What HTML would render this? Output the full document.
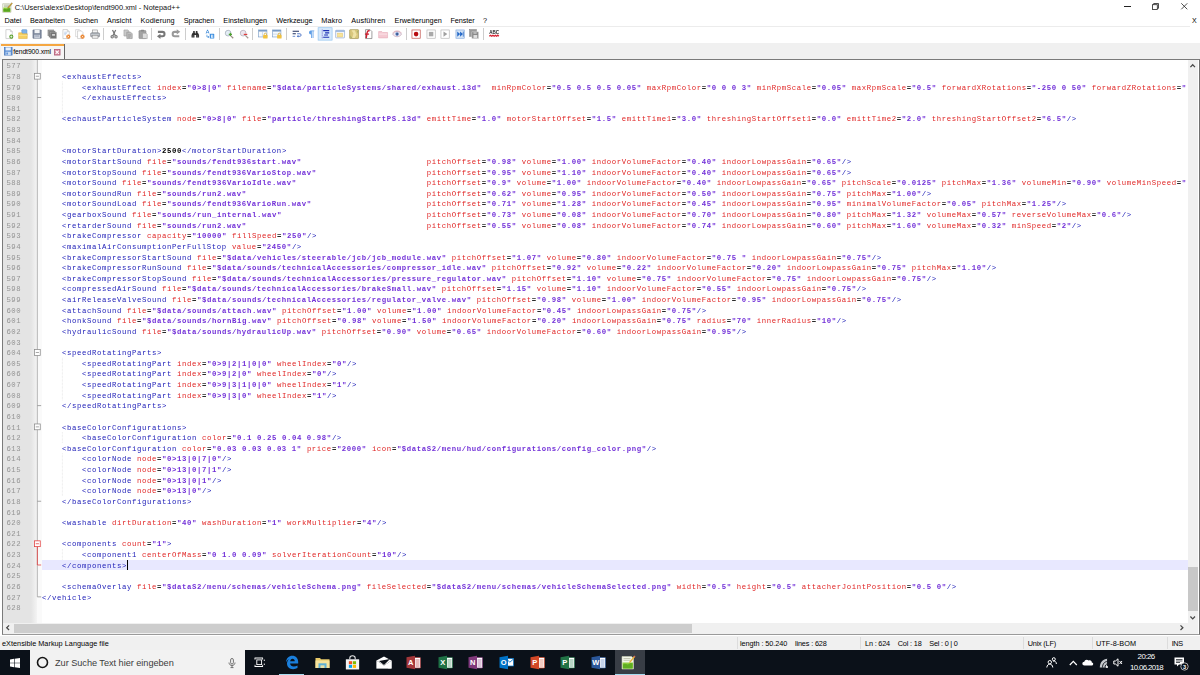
<!DOCTYPE html>
<html><head><meta charset="utf-8"><title>fendt900.xml - Notepad++</title>
<style>
*{box-sizing:border-box;margin:0;padding:0}
html,body{width:1200px;height:675px;overflow:hidden;background:#fff}
body{position:relative;font-family:"Liberation Sans",sans-serif;color:#000}
.abs{position:absolute}
svg{overflow:visible}
.ui{position:absolute;white-space:pre;font-size:7.4px;line-height:10px;color:#000}
#title{left:14.7px;top:2.2px;font-size:7.6px}
.menu{top:15.6px}
#tabbar{left:0;top:42.5px;width:1200px;height:17px;background:#f0f0f0}
#tab{left:1.3px;top:44px;width:63.4px;height:15px;background:#f6f6f6;border-right:1px solid #666}
#tabtop{left:1.3px;top:44px;width:63px;height:2.3px;background:#f5a742}
#edborder{left:1.6px;top:58.8px;width:1198px;height:576px;border:1px solid #7a7a7a;border-right-color:#707070;border-bottom-color:#9a9a9a;background:#fff}
#lnmargin{left:2.7px;top:59.8px;width:28.5px;height:563.5px;background:#e4e4e4}
#symmargin{left:31.2px;top:59.8px;width:6px;height:563.5px;background:linear-gradient(90deg,#e4e4e4,#f4f4f4)}
#foldmargin{left:37.2px;top:59.8px;width:4.6px;height:563.5px;background:#fafafa}
#foldline{left:37px;top:59.8px;width:0.7px;height:563.5px;background:#9a9a9a}
#curline{left:42px;top:559.7px;width:1146.2px;height:10.6px;background:#e8e8ff}
.ln,.cl{position:absolute;font-family:"Liberation Mono",monospace;font-size:7.3px;letter-spacing:0.62px;line-height:10.625px;height:10.625px;white-space:pre}
#clip{left:42px;top:59.8px;width:1145px;height:563.5px;overflow:hidden;filter:blur(0.3px)}
.ln{left:5.7px;width:15.7px;text-align:right;color:#949494;filter:blur(.3px)}
.cl{left:-0.1px;color:#000;margin-top:-59.8px}
.t{color:#2020b8}.a{color:#e02424}.v{color:#7230d8;font-weight:bold}.d{font-weight:bold;color:#000}.o{color:#2a2a2a;font-weight:bold}
#vscroll{left:1188.2px;top:59.8px;width:9.4px;height:563.5px;background:#f0f0f0}
#vthumb{left:1188.2px;top:566.7px;width:9.4px;height:44.7px;background:#c8c8c8}
#hscroll{left:2.7px;top:623.3px;width:1195px;height:10.5px;background:#f0f0f0}
#hthumb{left:13.8px;top:623.9px;width:678px;height:9.2px;background:#cdcdcd}
#corner{left:1188.2px;top:623.3px;width:9.4px;height:10.5px;background:#f0f0f0}
#status{left:0;top:635.6px;width:1200px;height:14.6px;background:#f0f0f0}
.st{top:638.6px}
#taskbar{left:0;top:650px;width:1200px;height:25px;background:#0b1119}
#search{left:30px;top:650px;width:215px;height:25px;background:#f2f2f2}
</style></head><body>
<!-- title bar -->
<svg class="abs" style="left:2.2px;top:1.6px" width="11" height="11" viewBox="0 0 16 16"><path d="M1 2.500h10l2 2V15H1z" fill="#f3f6ea" stroke="#aab08f" stroke-width=".8"/><path d="M2 8h10v6H2z" fill="#8fcf3c"/><path d="M2 10.500c2-2 4 1 6-.5s3-1 4-.5V14H2z" fill="#5aa61f"/><path d="M3 4.500h7M3 6.300h7" stroke="#9aa087" stroke-width=".9"/><path d="M8.500 7.500L14 1l1.200 1-5.200 6.500-1.800.6z" fill="#d9a62e" stroke="#6b5a2a" stroke-width=".5"/></svg>
<div class="abs" style="left:1124px;top:6.1px;width:6.6px;height:.8px;background:#222"></div>
<svg class="abs" style="left:1151.500px;top:2.800px" width="7" height="7" viewBox="0 0 7 7"><path d="M1.700 1.700V.5h4.800v4.800H5.300" fill="none" stroke="#222" stroke-width=".8"/><rect x=".5" y="1.700" width="4.800" height="4.800" fill="none" stroke="#222" stroke-width=".8"/></svg>
<svg class="abs" style="left:1180.800px;top:3px" width="6.600" height="6.600" viewBox="0 0 6.600 6.600"><path d="M.3.300l6 6M6.300.300l-6 6" stroke="#222" stroke-width=".8"/></svg>
<!-- menu -->
<div class="abs" style="left:0;top:26px;width:1190px;height:1px;background:#ececec"></div>
<!-- toolbar -->
<div class="abs" style="left:0;top:27px;width:520px;height:15px;filter:blur(.3px)"><div class="abs" style="left:0;top:-27px;width:520px;height:60px">
<svg class="abs" style="left:3.90px;top:28.80px" width="10.2" height="10.2" viewBox="0 0 16 16"><path d="M3 1h7l3 3v11H3z" fill="#fff" stroke="#b9b9b9" stroke-width="1"/><path d="M10 1v3h3" fill="#e8e8e8" stroke="#b9b9b9" stroke-width=".8"/><circle cx="11.5" cy="12" r="3.2" fill="#5aa02c"/><path d="M9.8 12h3.4M11.5 10.3v3.4" stroke="#fff" stroke-width="1.1"/></svg>
<svg class="abs" style="left:18.30px;top:28.80px" width="10.2" height="10.2" viewBox="0 0 16 16"><rect x="6" y="1" width="8" height="9" rx="1" fill="#7fb2e8" stroke="#4a86c8" stroke-width=".8"/><path d="M1 6h5l1 1.5h7.5V15H1z" fill="#f5cf5f" stroke="#d9a93a" stroke-width=".8"/><path d="M1 10h13.5" stroke="#fbe59a" stroke-width="1.2"/></svg>
<svg class="abs" style="left:31.80px;top:28.80px" width="10.2" height="10.2" viewBox="0 0 16 16"><path d="M1.500 1.500h13v13h-13z" fill="#7f8a9e" stroke="#6a748a" stroke-width="1"/><rect x="4" y="1.500" width="8" height="5" fill="#f1f3f6"/><rect x="3.500" y="9" width="9" height="5.500" fill="#c9cfda"/><rect x="5" y="10.500" width="6" height="1" fill="#7f8aa2"/></svg>
<svg class="abs" style="left:46.90px;top:28.80px" width="10.2" height="10.2" viewBox="0 0 16 16"><rect x="1" y="1" width="10" height="10" fill="#8c8c8c"/><rect x="3" y="3" width="10" height="10" fill="#808080" stroke="#b8b8b8" stroke-width=".5"/><rect x="5" y="5" width="10" height="10" fill="#767676" stroke="#b8b8b8" stroke-width=".5"/><rect x="8" y="8" width="4.500" height="2.500" fill="#e0e0e0"/></svg>
<svg class="abs" style="left:61.20px;top:28.80px" width="10.2" height="10.2" viewBox="0 0 16 16"><path d="M3 1h7l3 3v11H3z" fill="#fff" stroke="#b9b9b9" stroke-width="1"/><path d="M10 1v3h3" fill="#e8e8e8" stroke="#b9b9b9" stroke-width=".8"/><path d="M5 5h5M5 7h4M5 9h3" stroke="#9bb7e0" stroke-width=".9"/><circle cx="11.5" cy="12" r="3.3" fill="#e9822b"/><path d="M10.2 10.7l2.6 2.6M12.8 10.7l-2.6 2.6" stroke="#fff" stroke-width="1"/></svg>
<svg class="abs" style="left:75.10px;top:28.80px" width="10.2" height="10.2" viewBox="0 0 16 16"><path d="M1 1h6l2 2v9H1z" fill="#fff" stroke="#c4c4c4" stroke-width=".9"/><path d="M4 3h6l2.500 2.500v9.500H4z" fill="#fff" stroke="#b9b9b9" stroke-width=".9"/><circle cx="11.8" cy="12" r="3.3" fill="#e9822b"/><path d="M10.5 10.700l2.600 2.600M13.100 10.700l-2.600 2.600" stroke="#fff" stroke-width="1"/></svg>
<svg class="abs" style="left:89.60px;top:28.80px" width="10.2" height="10.2" viewBox="0 0 16 16"><rect x="4" y="1.5" width="8" height="5" fill="#f4f4f4" stroke="#8c8c8c" stroke-width=".9"/><rect x="1" y="6" width="14" height="6.500" rx="1.500" fill="#a9aeb5" stroke="#7c8188" stroke-width=".9"/><rect x="3.500" y="10" width="9" height="4.500" fill="#e9e9e9" stroke="#8c8c8c" stroke-width=".8"/><path d="M1.500 8.500h13" stroke="#d4d7db" stroke-width="1"/></svg>
<div class="abs" style="left:102.75px;top:28.3px;width:.7px;height:11.4px;background:#cdcdcd"></div>
<svg class="abs" style="left:108.90px;top:28.80px" width="10.2" height="10.2" viewBox="0 0 16 16"><path d="M5.500 1.500l4.500 9M10.500 1.500l-4.500 9" stroke="#747474" stroke-width="1.900" fill="none"/><circle cx="5" cy="12.300" r="1.900" fill="none" stroke="#747474" stroke-width="1.600"/><circle cx="11" cy="12.300" r="1.900" fill="none" stroke="#747474" stroke-width="1.600"/></svg>
<svg class="abs" style="left:123.30px;top:28.80px" width="10.2" height="10.2" viewBox="0 0 16 16"><path d="M1.500 1.500h6l2 2v7.500h-8z" fill="#c9c9c9" stroke="#9a9a9a" stroke-width=".9"/><path d="M6 5h6l2.500 2.500v7.500H6z" fill="#bdbdbd" stroke="#8e8e8e" stroke-width=".9"/><path d="M8 9h4.500M8 11h4.500M8 13h3" stroke="#8e8e8e" stroke-width=".8"/></svg>
<svg class="abs" style="left:137.60px;top:28.80px" width="10.2" height="10.2" viewBox="0 0 16 16"><rect x="1.500" y="2.500" width="11" height="12.500" rx="1" fill="#a3a3a3" stroke="#858585" stroke-width=".9"/><rect x="4.500" y="1" width="5" height="3" rx=".8" fill="#8a8a8a"/><path d="M7 6.500h5.500l2 2v6.500H7z" fill="#dcdcdc" stroke="#8e8e8e" stroke-width=".8"/></svg>
<div class="abs" style="left:151.05px;top:28.3px;width:.7px;height:11.4px;background:#cdcdcd"></div>
<svg class="abs" style="left:156.40px;top:28.80px" width="10.2" height="10.2" viewBox="0 0 16 16"><path d="M3 4.500H10C14.500 4.500 14.500 11.500 10 11.500H6" fill="none" stroke="#777" stroke-width="3.200"/><path d="M7 7.300L1.500 11.500 7 15.700z" fill="#777"/></svg>
<svg class="abs" style="left:170.80px;top:28.80px" width="10.2" height="10.2" viewBox="0 0 16 16"><path d="M13 11.500H6C1.500 11.500 1.500 4.500 6 4.500H10" fill="none" stroke="#999" stroke-width="3.200"/><path d="M9 .300L14.500 4.500 9 8.700z" fill="#999"/></svg>
<div class="abs" style="left:185.15px;top:28.3px;width:.7px;height:11.4px;background:#cdcdcd"></div>
<svg class="abs" style="left:191.10px;top:29.90px" width="8.6" height="8.6" viewBox="0 0 16 16"><path d="M4 2h3v4H4zM9 2h3v4H9z" fill="#333"/><path d="M3 5h4.500v1.500h1V5H13l2 4.500V14h-5.500V9.500h-3V14H1V9.500z" fill="#303030"/><path d="M2.500 10h2.500v3H2.500zM11 10h2.500v3H11z" fill="#555"/></svg>
<svg class="abs" style="left:204.60px;top:28.80px" width="10.2" height="10.2" viewBox="0 0 16 16"><path d="M1 7L3.500 1h1L7 7H5.800L5.300 5.600H2.700L2.200 7zM3 4.600h2L4 2.200z" fill="#2a7fd4"/><rect x="7.500" y="7.500" width="7" height="7.500" rx="1" fill="#3d8fe0"/><path d="M9.500 9h2.200c1.600 0 1.600 2 .4 2.200 1.500.2 1.500 2.600-.300 2.600H9.500zM10.600 10v.900h.900c.6 0 .6-.900 0-.900zM10.600 11.900v1h1.100c.7 0 .7-1 0-1z" fill="#fff"/><path d="M3 9v3.500h3M4.800 11l1.500 1.500L4.800 14" stroke="#2a7fd4" stroke-width="1" fill="none"/></svg>
<div class="abs" style="left:218.85px;top:28.3px;width:.7px;height:11.4px;background:#cdcdcd"></div>
<svg class="abs" style="left:224.30px;top:28.80px" width="10.2" height="10.2" viewBox="0 0 16 16"><circle cx="6.500" cy="6.500" r="4.500" fill="#e3edf5" stroke="#a9b3bd" stroke-width="1.300"/><path d="M10 10l4.500 4.500" stroke="#9a8f85" stroke-width="2"/><path d="M7.500 8.500h5M10 6v5" stroke="#4aa02c" stroke-width="1.700"/></svg>
<svg class="abs" style="left:238.60px;top:28.80px" width="10.2" height="10.2" viewBox="0 0 16 16"><circle cx="6.500" cy="6.500" r="4.500" fill="#ece6ee" stroke="#b9b3bd" stroke-width="1.300"/><path d="M10 10l4.500 4.500" stroke="#a79a95" stroke-width="2"/><path d="M7.500 8.500h5.500" stroke="#e03c3c" stroke-width="1.800"/></svg>
<div class="abs" style="left:252.45px;top:28.3px;width:.7px;height:11.4px;background:#cdcdcd"></div>
<svg class="abs" style="left:257.80px;top:28.80px" width="10.2" height="10.2" viewBox="0 0 16 16"><rect x="1" y="1.500" width="13" height="11" fill="#f7fafd" stroke="#7a9cc6" stroke-width="1"/><rect x="1" y="1.500" width="13" height="2.500" fill="#7a9cc6"/><path d="M7 4v8" stroke="#a9c0dc" stroke-width=".8"/><rect x="8" y="9.500" width="7" height="5.500" rx=".8" fill="#f2c23e"/><path d="M9.700 9.500V8.200c0-2.300 3.600-2.300 3.600 0V9.500" fill="none" stroke="#d9a521" stroke-width="1.100"/></svg>
<svg class="abs" style="left:272.10px;top:28.80px" width="10.2" height="10.2" viewBox="0 0 16 16"><rect x="1" y="1.500" width="13" height="11" fill="#f7fafd" stroke="#7a9cc6" stroke-width="1"/><rect x="1" y="1.500" width="13" height="2.500" fill="#7a9cc6"/><path d="M1.500 8h12" stroke="#a9c0dc" stroke-width=".8"/><rect x="8" y="9.500" width="7" height="5.500" rx=".8" fill="#f2c23e"/><path d="M9.700 9.500V8.200c0-2.300 3.600-2.300 3.600 0V9.500" fill="none" stroke="#d9a521" stroke-width="1.100"/></svg>
<div class="abs" style="left:286.15px;top:28.3px;width:.7px;height:11.4px;background:#cdcdcd"></div>
<svg class="abs" style="left:291.70px;top:28.80px" width="10.2" height="10.2" viewBox="0 0 16 16"><path d="M1 3.500h10M1 7.500h5" stroke="#1f2f5f" stroke-width="1.600"/><path d="M1 11.500h4" stroke="#6d8fd0" stroke-width="1.600"/><path d="M8 7.500h4.500c2.500 0 2.500 4 0 4H9" stroke="#3a66c0" stroke-width="1.300" fill="none"/><path d="M10 9.500L7.500 11.500 10 13.500z" fill="#3a66c0"/></svg>
<svg class="abs" style="left:306.00px;top:28.80px" width="10.2" height="10.2" viewBox="0 0 16 16"><path d="M7.500 2.500h5.500v1.200h-1.300V14h-1.300V3.700H9.200V14H7.900V8.800C3.800 8.800 3.800 2.500 7.500 2.500z" fill="#5e9ee6"/></svg>
<svg class="abs" style="left:320.30px;top:28.80px" width="10.2" height="10.2" viewBox="0 0 16 16"><rect x="-3" y="-2" width="22" height="19.500" fill="#d6e9fb" stroke="#8cc0ee" stroke-width="1"/><path d="M3.500 1v14" stroke="#5a3fc0" stroke-width="1.200" stroke-dasharray="1.500 1.500"/><path d="M5 2.500h9.500M8 6h6.500M6.500 9.500h6M5 13h9.500" stroke="#1c2fb4" stroke-width="1.800"/></svg>
<svg class="abs" style="left:334.70px;top:28.80px" width="10.2" height="10.2" viewBox="0 0 16 16"><rect x="1" y="2" width="14" height="12" rx="1" fill="#f3f6fb" stroke="#8aa6cc" stroke-width="1"/><rect x="1" y="2" width="14" height="2.500" fill="#9ab6dc"/><rect x="4" y="6.500" width="8" height="6" fill="#f8e49a" stroke="#e0c468" stroke-width=".7"/></svg>
<svg class="abs" style="left:349.00px;top:28.80px" width="10.2" height="10.2" viewBox="0 0 16 16"><rect x="1" y="1" width="14" height="14" rx="1" fill="#d9c77c" stroke="#9c8f4d" stroke-width="1"/><path d="M4 2l3 5-2 7h4l3-5-3-7z" fill="#efe3a7"/><path d="M2 10l3 4H2zM14 2v5l-2-3z" fill="#a9b26a"/></svg>
<svg class="abs" style="left:363.40px;top:28.80px" width="10.2" height="10.2" viewBox="0 0 16 16"><path d="M4 1h7l3 3v11H4z" fill="#fff" stroke="#6a6a6a" stroke-width="1"/><path d="M10.500 3c-3-.8-3.800 1-4.200 3.500L5 14.500" stroke="#cc1c2c" stroke-width="2.200" fill="none"/><path d="M3 8h6.500" stroke="#cc1c2c" stroke-width="1.900"/></svg>
<svg class="abs" style="left:377.70px;top:28.80px" width="10.2" height="10.2" viewBox="0 0 16 16"><path d="M1 4h5l1.500 1.500H15V14H1z" fill="#f5c9d2" stroke="#e5a9b6" stroke-width=".9"/><path d="M1.500 8h13" stroke="#fbe3e8" stroke-width="1.500"/></svg>
<svg class="abs" style="left:392.10px;top:28.80px" width="10.2" height="10.2" viewBox="0 0 16 16"><path d="M1 8c3-5.500 11-5.500 14 0-3 5.500-11 5.500-14 0z" fill="#f3eaf1" stroke="#b99bb0" stroke-width="1"/><circle cx="8" cy="8" r="2.800" fill="#5d86c8"/><circle cx="8" cy="8" r="1.200" fill="#1d2f5a"/><path d="M1.500 6C4 2 12 2 14.500 6" stroke="#d99aa8" stroke-width="1" fill="none"/></svg>
<div class="abs" style="left:406.15px;top:28.3px;width:.7px;height:11.4px;background:#cdcdcd"></div>
<svg class="abs" style="left:411.40px;top:28.80px" width="10.2" height="10.2" viewBox="0 0 16 16"><rect x="1.500" y="1.500" width="13" height="13" fill="#fff" stroke="#c2524c" stroke-width="1.100"/><circle cx="8" cy="8" r="3.600" fill="#b80c10"/></svg>
<svg class="abs" style="left:425.80px;top:28.80px" width="10.2" height="10.2" viewBox="0 0 16 16"><rect x="1.500" y="1.500" width="13" height="13" fill="#fff" stroke="#b0b0b0" stroke-width="1"/><rect x="4.500" y="4.500" width="7" height="7" fill="#a9a9a9"/></svg>
<svg class="abs" style="left:440.10px;top:28.80px" width="10.2" height="10.2" viewBox="0 0 16 16"><rect x="1.500" y="1.500" width="13" height="13" fill="#fff" stroke="#b0b0b0" stroke-width="1"/><path d="M5.500 4v8l6-4z" fill="#a0a0a0"/></svg>
<svg class="abs" style="left:454.50px;top:28.80px" width="10.2" height="10.2" viewBox="0 0 16 16"><rect x="1.500" y="1.500" width="13" height="13" fill="#d7e6f7" stroke="#7aa2d8" stroke-width="1"/><path d="M3.500 4v8l4.500-4zM8 4v8l4.500-4z" fill="#2468c8"/><path d="M13 4v8" stroke="#2468c8" stroke-width="1.200"/></svg>
<svg class="abs" style="left:468.80px;top:28.80px" width="10.2" height="10.2" viewBox="0 0 16 16"><rect x="1" y="1" width="10.500" height="10.500" fill="#9a9a9a" stroke="#7c7c7c" stroke-width=".8"/><rect x="4.500" y="4.500" width="10.500" height="10.500" fill="#8a8a8a" stroke="#dcdcdc" stroke-width=".8"/><rect x="7" y="9.500" width="6" height="4.500" fill="#e2e2e2"/><rect x="7" y="5" width="5" height="2.500" fill="#c4c4c4"/></svg>
<div class="abs" style="left:483.05px;top:28.3px;width:.7px;height:11.4px;background:#cdcdcd"></div>
<svg class="abs" style="left:489.20px;top:28.80px" width="10.2" height="10.2" viewBox="0 0 16 16"><text x="8" y="8.500" font-family="Liberation Sans,sans-serif" font-size="8.500" font-weight="bold" text-anchor="middle" fill="#1a1a1a" textLength="15.500" lengthAdjust="spacingAndGlyphs">ABC</text><path d="M.5 11.300l1.900-1.600 1.900 1.600 1.900-1.600 1.900 1.600 1.900-1.600 1.900 1.600 1.900-1.600 1.700 1.600" stroke="#d42030" stroke-width="1.900" fill="none"/></svg>
</div></div>
<!-- tab bar -->
<div class="abs" id="tabbar"></div>
<div class="abs" id="tab"></div>
<div class="abs" id="tabtop"></div>
<svg class="abs" style="left:3.700px;top:47.300px" width="8.400" height="8.400" viewBox="0 0 16 16"><rect x=".5" y=".5" width="15" height="15" fill="#5b8fd6" stroke="#3f6fb5" stroke-width="1"/><rect x="3" y=".8" width="10" height="5.700" fill="#e9f0fa"/><rect x="3" y="9" width="10" height="6.500" fill="#c9dcf3"/><rect x="4.500" y="10.500" width="3" height="4" fill="#5b8fd6"/></svg>
<svg class="abs" style="left:54.200px;top:48.700px" width="6.400" height="6.400" viewBox="0 0 12 12"><rect x=".6" y=".6" width="10.800" height="10.800" fill="#d4869c" stroke="#a9506c" stroke-width="1.200"/><path d="M3 3l6 6M9 3l-6 6" stroke="#fff" stroke-width="1.900"/></svg>
<!-- editor -->
<div class="abs" id="edborder"></div>
<div class="abs" id="lnmargin"></div>
<div class="abs" id="symmargin"></div>
<div class="abs" id="foldmargin"></div>
<div class="abs" id="curline"></div>
<svg class="abs" style="left:16px;top:0" width="50" height="675" viewBox="16 0 50 675">
<path d="M37.35 59.800V596.86" stroke="#9a9a9a" stroke-width=".7" fill="none"/>
<path d="M37.35 543.74V564.99" stroke="#e23a3a" stroke-width=".8" fill="none"/>
<rect x="34.45" y="73.34" width="5.800" height="5.800" fill="#fff" stroke="#8a8a8a" stroke-width=".75"/>
<path d="M35.75 76.24h3.200" stroke="#8a8a8a" stroke-width=".75"/>
<rect x="34.45" y="349.59" width="5.800" height="5.800" fill="#fff" stroke="#8a8a8a" stroke-width=".75"/>
<path d="M35.75 352.49h3.200" stroke="#8a8a8a" stroke-width=".75"/>
<rect x="34.45" y="423.96" width="5.800" height="5.800" fill="#fff" stroke="#8a8a8a" stroke-width=".75"/>
<path d="M35.75 426.86h3.200" stroke="#8a8a8a" stroke-width=".75"/>
<rect x="34.45" y="540.84" width="5.800" height="5.800" fill="#fff" stroke="#e23a3a" stroke-width=".75"/>
<path d="M35.75 543.74h3.200" stroke="#e23a3a" stroke-width=".75"/>
<path d="M37.35 97.49h3.800" stroke="#8a8a8a" stroke-width=".75"/>
<path d="M37.35 405.61h3.800" stroke="#8a8a8a" stroke-width=".75"/>
<path d="M37.35 501.24h3.800" stroke="#8a8a8a" stroke-width=".75"/>
<path d="M37.35 596.86h3.800" stroke="#8a8a8a" stroke-width=".75"/>
<path d="M37.35 564.99h3.800" stroke="#e23a3a" stroke-width=".75"/>
<path d="M62.400 81.55V113.42" stroke="#d8d8d8" stroke-width=".6" stroke-dasharray=".7 .7" fill="none"/>
<path d="M62.400 357.80V400.30" stroke="#d8d8d8" stroke-width=".6" stroke-dasharray=".7 .7" fill="none"/>
<path d="M62.400 432.18V442.80" stroke="#d8d8d8" stroke-width=".6" stroke-dasharray=".7 .7" fill="none"/>
<path d="M62.400 453.43V495.93" stroke="#d8d8d8" stroke-width=".6" stroke-dasharray=".7 .7" fill="none"/>
<path d="M62.400 549.05V559.67" stroke="#d8d8d8" stroke-width=".6" stroke-dasharray=".7 .7" fill="none"/>
</svg>
<div class="abs" style="left:126.5px;top:559.7px;width:1px;height:10.6px;background:#000"></div>
<div class="ln" style="top:61.300px">577</div>
<div class="ln" style="top:71.925px">578</div>
<div class="ln" style="top:82.550px">579</div>
<div class="ln" style="top:93.175px">580</div>
<div class="ln" style="top:103.800px">581</div>
<div class="ln" style="top:114.425px">582</div>
<div class="ln" style="top:125.050px">583</div>
<div class="ln" style="top:135.675px">584</div>
<div class="ln" style="top:146.300px">585</div>
<div class="ln" style="top:156.925px">586</div>
<div class="ln" style="top:167.550px">587</div>
<div class="ln" style="top:178.175px">588</div>
<div class="ln" style="top:188.800px">589</div>
<div class="ln" style="top:199.425px">590</div>
<div class="ln" style="top:210.050px">591</div>
<div class="ln" style="top:220.675px">592</div>
<div class="ln" style="top:231.300px">593</div>
<div class="ln" style="top:241.925px">594</div>
<div class="ln" style="top:252.550px">595</div>
<div class="ln" style="top:263.175px">596</div>
<div class="ln" style="top:273.800px">597</div>
<div class="ln" style="top:284.425px">598</div>
<div class="ln" style="top:295.050px">599</div>
<div class="ln" style="top:305.675px">600</div>
<div class="ln" style="top:316.300px">601</div>
<div class="ln" style="top:326.925px">602</div>
<div class="ln" style="top:337.550px">603</div>
<div class="ln" style="top:348.175px">604</div>
<div class="ln" style="top:358.800px">605</div>
<div class="ln" style="top:369.425px">606</div>
<div class="ln" style="top:380.050px">607</div>
<div class="ln" style="top:390.675px">608</div>
<div class="ln" style="top:401.300px">609</div>
<div class="ln" style="top:411.925px">610</div>
<div class="ln" style="top:422.550px">611</div>
<div class="ln" style="top:433.175px">612</div>
<div class="ln" style="top:443.800px">613</div>
<div class="ln" style="top:454.425px">614</div>
<div class="ln" style="top:465.050px">615</div>
<div class="ln" style="top:475.675px">616</div>
<div class="ln" style="top:486.300px">617</div>
<div class="ln" style="top:496.925px">618</div>
<div class="ln" style="top:507.550px">619</div>
<div class="ln" style="top:518.175px">620</div>
<div class="ln" style="top:528.800px">621</div>
<div class="ln" style="top:539.425px">622</div>
<div class="ln" style="top:550.050px">623</div>
<div class="ln" style="top:560.675px">624</div>
<div class="ln" style="top:571.300px">625</div>
<div class="ln" style="top:581.925px">626</div>
<div class="ln" style="top:592.550px">627</div>
<div class="ln" style="top:603.175px">628</div>
<div class="abs" id="clip">
<div class="cl" style="top:71.925px">    <span class="t">&lt;exhaustEffects</span><span class="t">&gt;</span></div>
<div class="cl" style="top:82.550px">        <span class="t">&lt;exhaustEffect</span> <span class="a">index</span><span class="o">=</span><span class="v">"0&gt;8|0"</span> <span class="a">filename</span><span class="o">=</span><span class="v">"$data/particleSystems/shared/exhaust.i3d"</span>  <span class="a">minRpmColor</span><span class="o">=</span><span class="v">"0.5 0.5 0.5 0.05"</span> <span class="a">maxRpmColor</span><span class="o">=</span><span class="v">"0 0 0 3"</span> <span class="a">minRpmScale</span><span class="o">=</span><span class="v">"0.05"</span> <span class="a">maxRpmScale</span><span class="o">=</span><span class="v">"0.5"</span> <span class="a">forwardXRotations</span><span class="o">=</span><span class="v">"-250 0 50"</span> <span class="a">forwardZRotations</span><span class="o">=</span><span class="v">"0 0 0"</span></div>
<div class="cl" style="top:93.175px">        <span class="t">&lt;/exhaustEffects</span><span class="t">&gt;</span></div>
<div class="cl" style="top:114.425px">    <span class="t">&lt;echaustParticleSystem</span> <span class="a">node</span><span class="o">=</span><span class="v">"0&gt;8|0"</span> <span class="a">file</span><span class="o">=</span><span class="v">"particle/threshingStartPS.i3d"</span> <span class="a">emittTime</span><span class="o">=</span><span class="v">"1.0"</span> <span class="a">motorStartOffset</span><span class="o">=</span><span class="v">"1.5"</span> <span class="a">emittTime1</span><span class="o">=</span><span class="v">"3.0"</span> <span class="a">threshingStartOffset1</span><span class="o">=</span><span class="v">"0.0"</span> <span class="a">emittTime2</span><span class="o">=</span><span class="v">"2.0"</span> <span class="a">threshingStartOffset2</span><span class="o">=</span><span class="v">"6.5"</span><span class="t">/&gt;</span></div>
<div class="cl" style="top:146.300px">    <span class="t">&lt;motorStartDuration</span><span class="t">&gt;</span><span class="d">2500</span><span class="t">&lt;/motorStartDuration</span><span class="t">&gt;</span></div>
<div class="cl" style="top:156.925px">    <span class="t">&lt;motorStartSound</span> <span class="a">file</span><span class="o">=</span><span class="v">"sounds/fendt936start.wav"</span>                         <span class="a">pitchOffset</span><span class="o">=</span><span class="v">"0.98"</span> <span class="a">volume</span><span class="o">=</span><span class="v">"1.00"</span> <span class="a">indoorVolumeFactor</span><span class="o">=</span><span class="v">"0.40"</span> <span class="a">indoorLowpassGain</span><span class="o">=</span><span class="v">"0.65"</span><span class="t">/&gt;</span></div>
<div class="cl" style="top:167.550px">    <span class="t">&lt;motorStopSound</span> <span class="a">file</span><span class="o">=</span><span class="v">"sounds/fendt936VarioStop.wav"</span>                      <span class="a">pitchOffset</span><span class="o">=</span><span class="v">"0.95"</span> <span class="a">volume</span><span class="o">=</span><span class="v">"1.10"</span> <span class="a">indoorVolumeFactor</span><span class="o">=</span><span class="v">"0.40"</span> <span class="a">indoorLowpassGain</span><span class="o">=</span><span class="v">"0.65"</span><span class="t">/&gt;</span></div>
<div class="cl" style="top:178.175px">    <span class="t">&lt;motorSound</span> <span class="a">file</span><span class="o">=</span><span class="v">"sounds/fendt936VarioIdle.wav"</span>                          <span class="a">pitchOffset</span><span class="o">=</span><span class="v">"0.9"</span> <span class="a">volume</span><span class="o">=</span><span class="v">"1.00"</span> <span class="a">indoorVolumeFactor</span><span class="o">=</span><span class="v">"0.40"</span> <span class="a">indoorLowpassGain</span><span class="o">=</span><span class="v">"0.65"</span> <span class="a">pitchScale</span><span class="o">=</span><span class="v">"0.0125"</span> <span class="a">pitchMax</span><span class="o">=</span><span class="v">"1.36"</span> <span class="a">volumeMin</span><span class="o">=</span><span class="v">"0.90"</span> <span class="a">volumeMinSpeed</span><span class="o">=</span><span class="v">"20"</span></div>
<div class="cl" style="top:188.800px">    <span class="t">&lt;motorSoundRun</span> <span class="a">file</span><span class="o">=</span><span class="v">"sounds/run2.wav"</span>                                    <span class="a">pitchOffset</span><span class="o">=</span><span class="v">"0.62"</span> <span class="a">volume</span><span class="o">=</span><span class="v">"0.95"</span> <span class="a">indoorVolumeFactor</span><span class="o">=</span><span class="v">"0.50"</span> <span class="a">indoorLowpassGain</span><span class="o">=</span><span class="v">"0.75"</span> <span class="a">pitchMax</span><span class="o">=</span><span class="v">"1.00"</span><span class="t">/&gt;</span></div>
<div class="cl" style="top:199.425px">    <span class="t">&lt;motorSoundLoad</span> <span class="a">file</span><span class="o">=</span><span class="v">"sounds/fendt936VarioRun.wav"</span>                       <span class="a">pitchOffset</span><span class="o">=</span><span class="v">"0.71"</span> <span class="a">volume</span><span class="o">=</span><span class="v">"1.28"</span> <span class="a">indoorVolumeFactor</span><span class="o">=</span><span class="v">"0.45"</span> <span class="a">indoorLowpassGain</span><span class="o">=</span><span class="v">"0.95"</span> <span class="a">minimalVolumeFactor</span><span class="o">=</span><span class="v">"0.05"</span> <span class="a">pitchMax</span><span class="o">=</span><span class="v">"1.25"</span><span class="t">/&gt;</span></div>
<div class="cl" style="top:210.050px">    <span class="t">&lt;gearboxSound</span> <span class="a">file</span><span class="o">=</span><span class="v">"sounds/run_internal.wav"</span>                             <span class="a">pitchOffset</span><span class="o">=</span><span class="v">"0.73"</span> <span class="a">volume</span><span class="o">=</span><span class="v">"0.08"</span> <span class="a">indoorVolumeFactor</span><span class="o">=</span><span class="v">"0.70"</span> <span class="a">indoorLowpassGain</span><span class="o">=</span><span class="v">"0.80"</span> <span class="a">pitchMax</span><span class="o">=</span><span class="v">"1.32"</span> <span class="a">volumeMax</span><span class="o">=</span><span class="v">"0.57"</span> <span class="a">reverseVolumeMax</span><span class="o">=</span><span class="v">"0.6"</span><span class="t">/&gt;</span></div>
<div class="cl" style="top:220.675px">    <span class="t">&lt;retarderSound</span> <span class="a">file</span><span class="o">=</span><span class="v">"sounds/run2.wav"</span>                                    <span class="a">pitchOffset</span><span class="o">=</span><span class="v">"0.55"</span> <span class="a">volume</span><span class="o">=</span><span class="v">"0.08"</span> <span class="a">indoorVolumeFactor</span><span class="o">=</span><span class="v">"0.74"</span> <span class="a">indoorLowpassGain</span><span class="o">=</span><span class="v">"0.60"</span> <span class="a">pitchMax</span><span class="o">=</span><span class="v">"1.60"</span> <span class="a">volumeMax</span><span class="o">=</span><span class="v">"0.32"</span> <span class="a">minSpeed</span><span class="o">=</span><span class="v">"2"</span><span class="t">/&gt;</span></div>
<div class="cl" style="top:231.300px">    <span class="t">&lt;brakeCompressor</span> <span class="a">capacity</span><span class="o">=</span><span class="v">"10000"</span> <span class="a">fillSpeed</span><span class="o">=</span><span class="v">"250"</span><span class="t">/&gt;</span></div>
<div class="cl" style="top:241.925px">    <span class="t">&lt;maximalAirConsumptionPerFullStop</span> <span class="a">value</span><span class="o">=</span><span class="v">"2450"</span><span class="t">/&gt;</span></div>
<div class="cl" style="top:252.550px">    <span class="t">&lt;brakeCompressorStartSound</span> <span class="a">file</span><span class="o">=</span><span class="v">"$data/vehicles/steerable/jcb/jcb_module.wav"</span> <span class="a">pitchOffset</span><span class="o">=</span><span class="v">"1.07"</span> <span class="a">volume</span><span class="o">=</span><span class="v">"0.80"</span> <span class="a">indoorVolumeFactor</span><span class="o">=</span><span class="v">"0.75 "</span> <span class="a">indoorLowpassGain</span><span class="o">=</span><span class="v">"0.75"</span><span class="t">/&gt;</span></div>
<div class="cl" style="top:263.175px">    <span class="t">&lt;brakeCompressorRunSound</span> <span class="a">file</span><span class="o">=</span><span class="v">"$data/sounds/technicalAccessories/compressor_idle.wav"</span> <span class="a">pitchOffset</span><span class="o">=</span><span class="v">"0.92"</span> <span class="a">volume</span><span class="o">=</span><span class="v">"0.22"</span> <span class="a">indoorVolumeFactor</span><span class="o">=</span><span class="v">"0.20"</span> <span class="a">indoorLowpassGain</span><span class="o">=</span><span class="v">"0.75"</span> <span class="a">pitchMax</span><span class="o">=</span><span class="v">"1.10"</span><span class="t">/&gt;</span></div>
<div class="cl" style="top:273.800px">    <span class="t">&lt;brakeCompressorStopSound</span> <span class="a">file</span><span class="o">=</span><span class="v">"$data/sounds/technicalAccessories/pressure_regulator.wav"</span> <span class="a">pitchOffset</span><span class="o">=</span><span class="v">"1.10"</span> <span class="a">volume</span><span class="o">=</span><span class="v">"0.75"</span> <span class="a">indoorVolumeFactor</span><span class="o">=</span><span class="v">"0.75"</span> <span class="a">indoorLowpassGain</span><span class="o">=</span><span class="v">"0.75"</span><span class="t">/&gt;</span></div>
<div class="cl" style="top:284.425px">    <span class="t">&lt;compressedAirSound</span> <span class="a">file</span><span class="o">=</span><span class="v">"$data/sounds/technicalAccessories/brakeSmall.wav"</span> <span class="a">pitchOffset</span><span class="o">=</span><span class="v">"1.15"</span> <span class="a">volume</span><span class="o">=</span><span class="v">"1.10"</span> <span class="a">indoorVolumeFactor</span><span class="o">=</span><span class="v">"0.55"</span> <span class="a">indoorLowpassGain</span><span class="o">=</span><span class="v">"0.75"</span><span class="t">/&gt;</span></div>
<div class="cl" style="top:295.050px">    <span class="t">&lt;airReleaseValveSound</span> <span class="a">file</span><span class="o">=</span><span class="v">"$data/sounds/technicalAccessories/regulator_valve.wav"</span> <span class="a">pitchOffset</span><span class="o">=</span><span class="v">"0.98"</span> <span class="a">volume</span><span class="o">=</span><span class="v">"1.00"</span> <span class="a">indoorVolumeFactor</span><span class="o">=</span><span class="v">"0.95"</span> <span class="a">indoorLowpassGain</span><span class="o">=</span><span class="v">"0.75"</span><span class="t">/&gt;</span></div>
<div class="cl" style="top:305.675px">    <span class="t">&lt;attachSound</span> <span class="a">file</span><span class="o">=</span><span class="v">"$data/sounds/attach.wav"</span> <span class="a">pitchOffset</span><span class="o">=</span><span class="v">"1.00"</span> <span class="a">volume</span><span class="o">=</span><span class="v">"1.00"</span> <span class="a">indoorVolumeFactor</span><span class="o">=</span><span class="v">"0.45"</span> <span class="a">indoorLowpassGain</span><span class="o">=</span><span class="v">"0.75"</span><span class="t">/&gt;</span></div>
<div class="cl" style="top:316.300px">    <span class="t">&lt;honkSound</span> <span class="a">file</span><span class="o">=</span><span class="v">"$data/sounds/hornBig.wav"</span> <span class="a">pitchOffset</span><span class="o">=</span><span class="v">"0.98"</span> <span class="a">volume</span><span class="o">=</span><span class="v">"1.50"</span> <span class="a">indoorVolumeFactor</span><span class="o">=</span><span class="v">"0.20"</span> <span class="a">indoorLowpassGain</span><span class="o">=</span><span class="v">"0.75"</span> <span class="a">radius</span><span class="o">=</span><span class="v">"70"</span> <span class="a">innerRadius</span><span class="o">=</span><span class="v">"10"</span><span class="t">/&gt;</span></div>
<div class="cl" style="top:326.925px">    <span class="t">&lt;hydraulicSound</span> <span class="a">file</span><span class="o">=</span><span class="v">"$data/sounds/hydraulicUp.wav"</span> <span class="a">pitchOffset</span><span class="o">=</span><span class="v">"0.90"</span> <span class="a">volume</span><span class="o">=</span><span class="v">"0.65"</span> <span class="a">indoorVolumeFactor</span><span class="o">=</span><span class="v">"0.60"</span> <span class="a">indoorLowpassGain</span><span class="o">=</span><span class="v">"0.95"</span><span class="t">/&gt;</span></div>
<div class="cl" style="top:348.175px">    <span class="t">&lt;speedRotatingParts</span><span class="t">&gt;</span></div>
<div class="cl" style="top:358.800px">        <span class="t">&lt;speedRotatingPart</span> <span class="a">index</span><span class="o">=</span><span class="v">"0&gt;9|2|1|0|0"</span> <span class="a">wheelIndex</span><span class="o">=</span><span class="v">"0"</span><span class="t">/&gt;</span></div>
<div class="cl" style="top:369.425px">        <span class="t">&lt;speedRotatingPart</span> <span class="a">index</span><span class="o">=</span><span class="v">"0&gt;9|2|0"</span> <span class="a">wheelIndex</span><span class="o">=</span><span class="v">"0"</span><span class="t">/&gt;</span></div>
<div class="cl" style="top:380.050px">        <span class="t">&lt;speedRotatingPart</span> <span class="a">index</span><span class="o">=</span><span class="v">"0&gt;9|3|1|0|0"</span> <span class="a">wheelIndex</span><span class="o">=</span><span class="v">"1"</span><span class="t">/&gt;</span></div>
<div class="cl" style="top:390.675px">        <span class="t">&lt;speedRotatingPart</span> <span class="a">index</span><span class="o">=</span><span class="v">"0&gt;9|3|0"</span> <span class="a">wheelIndex</span><span class="o">=</span><span class="v">"1"</span><span class="t">/&gt;</span></div>
<div class="cl" style="top:401.300px">    <span class="t">&lt;/speedRotatingParts</span><span class="t">&gt;</span></div>
<div class="cl" style="top:422.550px">    <span class="t">&lt;baseColorConfigurations</span><span class="t">&gt;</span></div>
<div class="cl" style="top:433.175px">        <span class="t">&lt;baseColorConfiguration</span> <span class="a">color</span><span class="o">=</span><span class="v">"0.1 0.25 0.04 0.98"</span><span class="t">/&gt;</span></div>
<div class="cl" style="top:443.800px">    <span class="t">&lt;baseColorConfiguration</span> <span class="a">color</span><span class="o">=</span><span class="v">"0.03 0.03 0.03 1"</span> <span class="a">price</span><span class="o">=</span><span class="v">"2000"</span> <span class="a">icon</span><span class="o">=</span><span class="v">"$dataS2/menu/hud/configurations/config_color.png"</span><span class="t">/&gt;</span></div>
<div class="cl" style="top:454.425px">        <span class="t">&lt;colorNode</span> <span class="a">node</span><span class="o">=</span><span class="v">"0&gt;13|0|7|0"</span><span class="t">/&gt;</span></div>
<div class="cl" style="top:465.050px">        <span class="t">&lt;colorNode</span> <span class="a">node</span><span class="o">=</span><span class="v">"0&gt;13|0|7|1"</span><span class="t">/&gt;</span></div>
<div class="cl" style="top:475.675px">        <span class="t">&lt;colorNode</span> <span class="a">node</span><span class="o">=</span><span class="v">"0&gt;13|0|1"</span><span class="t">/&gt;</span></div>
<div class="cl" style="top:486.300px">        <span class="t">&lt;colorNode</span> <span class="a">node</span><span class="o">=</span><span class="v">"0&gt;13|0"</span><span class="t">/&gt;</span></div>
<div class="cl" style="top:496.925px">    <span class="t">&lt;/baseColorConfigurations</span><span class="t">&gt;</span></div>
<div class="cl" style="top:518.175px">    <span class="t">&lt;washable</span> <span class="a">dirtDuration</span><span class="o">=</span><span class="v">"40"</span> <span class="a">washDuration</span><span class="o">=</span><span class="v">"1"</span> <span class="a">workMultiplier</span><span class="o">=</span><span class="v">"4"</span><span class="t">/&gt;</span></div>
<div class="cl" style="top:539.425px">    <span class="t">&lt;components</span> <span class="a">count</span><span class="o">=</span><span class="v">"1"</span><span class="t">&gt;</span></div>
<div class="cl" style="top:550.050px">        <span class="t">&lt;component1</span> <span class="a">centerOfMass</span><span class="o">=</span><span class="v">"0 1.0 0.09"</span> <span class="a">solverIterationCount</span><span class="o">=</span><span class="v">"10"</span><span class="t">/&gt;</span></div>
<div class="cl" style="top:560.675px">    <span class="t">&lt;/components</span><span class="t">&gt;</span></div>
<div class="cl" style="top:581.925px">    <span class="t">&lt;schemaOverlay</span> <span class="a">file</span><span class="o">=</span><span class="v">"$dataS2/menu/schemas/vehicleSchema.png"</span> <span class="a">fileSelected</span><span class="o">=</span><span class="v">"$dataS2/menu/schemas/vehicleSchemaSelected.png"</span> <span class="a">width</span><span class="o">=</span><span class="v">"0.5"</span> <span class="a">height</span><span class="o">=</span><span class="v">"0.5"</span> <span class="a">attacherJointPosition</span><span class="o">=</span><span class="v">"0.5 0"</span><span class="t">/&gt;</span></div>
<div class="cl" style="top:592.550px"><span class="t">&lt;/vehicle</span><span class="t">&gt;</span></div>
</div>
<div class="abs" id="vscroll"></div><div class="abs" id="vthumb"></div>
<div class="abs" id="hscroll"></div><div class="abs" id="hthumb"></div>
<div class="abs" id="corner"></div>
<svg class="abs" style="left:1189.600px;top:63.800px" width="5.400" height="3.600" viewBox="0 0 5.400 3.600"><path d="M.4 3.100L2.700.700 5 3.100" fill="none" stroke="#484848" stroke-width="1.250"/></svg>
<svg class="abs" style="left:1189.600px;top:615.600px" width="5.400" height="3.600" viewBox="0 0 5.400 3.600"><path d="M.4.500L2.700 2.900 5 .5" fill="none" stroke="#484848" stroke-width="1.250"/></svg>
<svg class="abs" style="left:5.800px;top:625.100px" width="3.600" height="5.400" viewBox="0 0 3.600 5.400"><path d="M3.100.4L.700 2.700 3.100 5" fill="none" stroke="#484848" stroke-width="1.250"/></svg>
<svg class="abs" style="left:1180.400px;top:625.100px" width="3.600" height="5.400" viewBox="0 0 3.600 5.400"><path d="M.5.400L2.900 2.700.5 5" fill="none" stroke="#484848" stroke-width="1.250"/></svg>
<!-- status bar -->
<div class="abs" id="status"></div>
<div class="abs" style="left:737px;top:637px;width:1px;height:12px;background:#dcdcdc"></div><div class="abs" style="left:860px;top:637px;width:1px;height:12px;background:#dcdcdc"></div><div class="abs" style="left:1023px;top:637px;width:1px;height:12px;background:#dcdcdc"></div><div class="abs" style="left:1092px;top:637px;width:1px;height:12px;background:#dcdcdc"></div><div class="abs" style="left:1167px;top:637px;width:1px;height:12px;background:#dcdcdc"></div>
<!-- taskbar -->
<div class="abs" id="taskbar"></div>
<div class="abs" id="search"></div>
<svg class="abs" style="left:10.00px;top:657.50px" width="10" height="10" viewBox="0 0 10 10"><path d="M0 1.400L4.100.800v3.900H0zM4.700.700L10 0v4.700H4.700zM0 5.300h4.100v3.900L0 8.600zM4.700 5.300H10V10L4.700 9.300z" fill="#fff"/></svg>
<svg class="abs" style="left:36.00px;top:656.00px" width="13" height="13" viewBox="0 0 13 13"><circle cx="6.500" cy="6.500" r="5" fill="none" stroke="#161616" stroke-width="1.600"/></svg>
<svg class="abs" style="left:228.00px;top:657.50px" width="8" height="10" viewBox="0 0 8 10"><rect x="2.600" y=".5" width="2.800" height="5.500" rx="1.400" fill="none" stroke="#555" stroke-width=".8"/><path d="M1 4.500c0 4 6 4 6 0M4 7.500v2M2.500 9.600h3" fill="none" stroke="#555" stroke-width=".8"/></svg>
<svg class="abs" style="left:254.25px;top:656.95px" width="11.5" height="10.5" viewBox="0 0 11.5 10.5"><rect x="2.800" y="2.900" width="4.800" height="4.700" fill="none" stroke="#fff" stroke-width=".9"/><path d="M.6 1h8.400M.6 9.500h8.400" stroke="#fff" stroke-width="1"/><path d="M1 1v1.700M1 7.800v1.700M8.600 1v1.700M8.600 7.800v1.700" stroke="#fff" stroke-width=".8"/><rect x="9.800" y="2.600" width="1" height="1.300" fill="#fff"/><rect x="9.800" y="6.600" width="1" height="1.300" fill="#fff"/></svg>
<svg class="abs" style="left:285.00px;top:655.00px" width="14" height="15" viewBox="0 0 14 15"><path d="M1 7.300C1.300 3 4 .8 7.300.8c3.600 0 5.900 2.600 5.900 6.200v1.600H5.100c.2 1.900 1.700 2.900 3.700 2.900 1.400 0 2.600-.4 3.700-1.100v2.700c-1.200.7-2.700 1.100-4.400 1.100C4.300 14.200 2 11.900 2 8.500c0-2 .9-3.600 2.300-4.600C2.900 4.500 1.700 5.600 1 7.300zM5.200 6.300h4.600C9.700 4.700 8.900 3.700 7.500 3.700c-1.300 0-2.100 1-2.300 2.600z" fill="#1a7fdc"/></svg>
<svg class="abs" style="left:315.00px;top:656.30px" width="15" height="13" viewBox="0 0 15 13"><path d="M.5 2h4.500l1 1.300H14.500V12H.5z" fill="#e9cb6a"/><path d="M.5 4.500h14V12H.5z" fill="#f6e39c"/><rect x="3.500" y="7.300" width="8" height="4.700" fill="#5fb0d4"/><rect x="5.500" y="9.300" width="4" height="2.700" fill="#e8e0a8"/></svg>
<svg class="abs" style="left:345.20px;top:654.50px" width="15" height="15" viewBox="0 0 14 14"><path d="M4.500 4V2.800c0-2.700 5-2.700 5 0V4" fill="none" stroke="#e9e9e9" stroke-width="1"/><path d="M.8 4h12.400v9.500H.8z" fill="#f4f4f4"/><rect x="3.600" y="5.800" width="3" height="2.800" fill="#f25022"/><rect x="7.300" y="5.800" width="3" height="2.800" fill="#7fba00"/><rect x="3.600" y="9.200" width="3" height="2.800" fill="#00a4ef"/><rect x="7.300" y="9.200" width="3" height="2.800" fill="#ffb900"/></svg>
<svg class="abs" style="left:375.80px;top:656.00px" width="16" height="13" viewBox="0 0 16 13"><path d="M.5 4.500L8 .5l7.500 4v8H.5z" fill="#fff"/><path d="M.5 4.500L8 9.500l7.500-5L12 12.500H.5z" fill="#0b1119"/><path d="M.5 4.500l7.500 5 7.500-5v8H.5z" fill="#fff"/><path d="M3 5l11-2-6 6z" fill="#0b1119"/></svg>
<svg class="abs" style="left:406.30px;top:655.00px" width="15" height="15" viewBox="0 0 15 15"><rect x="7" y="2.500" width="7.500" height="10.500" rx=".6" fill="#fff" stroke="#a4373a" stroke-width=".7"/><path d="M9.500 5h4M9.500 7h4M9.500 9h4M9.500 11h4" stroke="#c9686a" stroke-width=".9"/><path d="M.5 2.200L9 .7v13.600L.5 12.800z" fill="#a4373a"/><text x="4.700" y="10.300" font-family="Liberation Sans,sans-serif" font-weight="bold" font-size="7.500" text-anchor="middle" fill="#fff">A</text></svg>
<svg class="abs" style="left:437.50px;top:655.00px" width="15" height="15" viewBox="0 0 15 15"><rect x="7" y="2.500" width="7.500" height="10.500" rx=".6" fill="#fff" stroke="#1e7145" stroke-width=".7"/><path d="M9.500 5h4M9.500 7h4M9.500 9h4M9.500 11h4" stroke="#5fa27e" stroke-width=".9"/><path d="M.5 2.200L9 .7v13.600L.5 12.800z" fill="#1e7145"/><text x="4.700" y="10.300" font-family="Liberation Sans,sans-serif" font-weight="bold" font-size="7.500" text-anchor="middle" fill="#fff">X</text></svg>
<svg class="abs" style="left:467.80px;top:655.00px" width="15" height="15" viewBox="0 0 15 15"><rect x="7" y="2.500" width="7.500" height="10.500" rx=".6" fill="#fff" stroke="#80397b" stroke-width=".7"/><path d="M9.500 5h4M9.500 7h4M9.500 9h4M9.500 11h4" stroke="#b078ab" stroke-width=".9"/><path d="M.5 2.200L9 .7v13.600L.5 12.800z" fill="#80397b"/><text x="4.700" y="10.300" font-family="Liberation Sans,sans-serif" font-weight="bold" font-size="7.500" text-anchor="middle" fill="#fff">N</text></svg>
<svg class="abs" style="left:498.50px;top:655.00px" width="15" height="15" viewBox="0 0 15 15"><rect x="7" y="3.500" width="7.500" height="7.500" fill="#fff" stroke="#0072c6" stroke-width=".7"/><path d="M7.500 4.200l3.400 3 3.400-3" fill="none" stroke="#0072c6" stroke-width=".9"/><path d="M.5 2.200L9 .7v13.600L.5 12.800z" fill="#0072c6"/><text x="4.700" y="10.300" font-family="Liberation Sans,sans-serif" font-weight="bold" font-size="7.500" text-anchor="middle" fill="#fff">O</text></svg>
<svg class="abs" style="left:529.50px;top:655.00px" width="15" height="15" viewBox="0 0 15 15"><rect x="7" y="2.500" width="7.500" height="10.500" rx=".6" fill="#fff" stroke="#d24726" stroke-width=".7"/><path d="M9.500 5h4M9.500 7h4M9.500 9h4M9.500 11h4" stroke="#e88d75" stroke-width=".9"/><path d="M.5 2.200L9 .7v13.600L.5 12.800z" fill="#d24726"/><text x="4.700" y="10.300" font-family="Liberation Sans,sans-serif" font-weight="bold" font-size="7.500" text-anchor="middle" fill="#fff">P</text></svg>
<svg class="abs" style="left:560.00px;top:655.00px" width="15" height="15" viewBox="0 0 15 15"><rect x="7" y="2.500" width="7.500" height="10.500" rx=".6" fill="#fff" stroke="#217346" stroke-width=".7"/><path d="M9.500 5h4M9.500 7h4M9.500 9h4M9.500 11h4" stroke="#5fa27e" stroke-width=".9"/><path d="M.5 2.200L9 .7v13.600L.5 12.800z" fill="#217346"/><text x="4.700" y="10.300" font-family="Liberation Sans,sans-serif" font-weight="bold" font-size="7.500" text-anchor="middle" fill="#fff">P</text></svg>
<svg class="abs" style="left:590.80px;top:655.00px" width="15" height="15" viewBox="0 0 15 15"><rect x="7" y="2.500" width="7.500" height="10.500" rx=".6" fill="#fff" stroke="#2b579a" stroke-width=".7"/><path d="M9.500 5h4M9.500 7h4M9.500 9h4M9.500 11h4" stroke="#7d9cd0" stroke-width=".9"/><path d="M.5 2.200L9 .7v13.600L.5 12.800z" fill="#2b579a"/><text x="4.700" y="10.300" font-family="Liberation Sans,sans-serif" font-weight="bold" font-size="7.500" text-anchor="middle" fill="#fff">W</text></svg>
<div class="abs" style="left:614.6px;top:650px;width:30px;height:25px;background:#383d45"></div>
<div class="abs" style="left:614.6px;top:673.7px;width:30px;height:1.3px;background:#a5dcf0"></div>
<div class="abs" style="left:279.4px;top:673.7px;width:24.6px;height:1.3px;background:#a5dcf0"></div>
<svg class="abs" style="left:621.00px;top:655.00px" width="15" height="15" viewBox="0 0 15 15"><path d="M1 1.500h9.500l2 2V14H1z" fill="#f3f6ea" stroke="#c9cfb5" stroke-width=".6"/><path d="M1.500 7.500h10.500V13.500H1.500z" fill="#8fcf3c"/><path d="M2 9.500c2-2 4 1 6-.5s2.500-1 3.500-.5V13.500H2z" fill="#5fae22"/><path d="M2.500 3.500h7M2.500 5.300h7" stroke="#b6bba5" stroke-width=".8"/><path d="M8.500 6.500L13 1l1 1-4.500 5.500-1.500.5z" fill="#e9b23a"/><path d="M12.500 1.500l1-1 1 1-1 1z" fill="#d96b5a"/></svg>
<svg class="abs" style="left:1045.50px;top:656.50px" width="11" height="11" viewBox="0 0 11 11"><circle cx="3.800" cy="5.200" r="1.700" fill="none" stroke="#fff" stroke-width="1"/><path d="M.8 10.500c.3-4.500 5.700-4.500 6 0" fill="none" stroke="#fff" stroke-width="1"/><circle cx="7.800" cy="2.200" r="1.500" fill="none" stroke="#fff" stroke-width="1"/><path d="M7.300 4.300c1.800-.6 3 .6 3.100 2.700" fill="none" stroke="#fff" stroke-width="1"/></svg>
<svg class="abs" style="left:1068.70px;top:660.00px" width="8.6" height="6" viewBox="0 0 8.6 6"><path d="M.8 5L4.300 1.300 7.800 5" fill="none" stroke="#fff" stroke-width="1.200"/></svg>
<svg class="abs" style="left:1082.45px;top:658.00px" width="11.5" height="8" viewBox="0 0 11.5 8"><path d="M2.500 7.500c-2.800 0-2.800-3.600-.2-3.700C2.600 1.600 5.300.9 6.500 2.600 8.400 1.600 10 3 9.800 4.500c2 .2 1.900 3-.1 3z" fill="#fff"/></svg>
<svg class="abs" style="left:1099.25px;top:658.00px" width="9.5" height="10" viewBox="0 0 9.5 10"><path d="M8.500 9.500V.8C3.900.8.800 4.500.8 9.500z" fill="#c4c8cc"/><path d="M8.500 9.500V.8M8.500 3.500C5.500 3.500 3.500 6 3.500 9.500M8.500 6C7 6 6 7.500 6 9.500" fill="none" stroke="#0b1119" stroke-width=".9"/><circle cx="8" cy="9" r="1" fill="#fff"/></svg>
<svg class="abs" style="left:1112.50px;top:658.00px" width="10" height="9" viewBox="0 0 10 9"><path d="M.8 3h1.700L5 .8v7.400L2.500 6H.8z" fill="none" stroke="#fff" stroke-width="1"/><path d="M6.500 3l2.500 3M9 3L6.500 6" stroke="#fff" stroke-width="1"/></svg>
<svg class="abs" style="left:1174.25px;top:657.00px" width="10.5" height="10" viewBox="0 0 10.5 10"><path d="M.5.5h9.500v7H5L3 9.500V7.500H.5z" fill="#fff"/><path d="M2 2.500h6.500M2 4h6.500M2 5.500h4" stroke="#0b1119" stroke-width=".7"/></svg>
<svg class="abs" style="left:1179.70px;top:662.00px" width="9" height="9" viewBox="0 0 9 9"><circle cx="4.500" cy="4.500" r="3.700" fill="#0b1119" stroke="#cfcfcf" stroke-width=".8"/><text x="4.500" y="6.500" font-family="Liberation Sans,sans-serif" font-size="5.600" font-weight="bold" text-anchor="middle" fill="#fff">3</text></svg>
<div class="ui" style="left:14.70px;top:3.04px;font-size:7.4px;letter-spacing:0.012px;color:#111;">C:\Users\alexs\Desktop\fendt900.xml - Notepad++</div>
<div class="ui" style="left:4.50px;top:15.77px;font-size:7.3px;letter-spacing:-0.069px;color:#000;">Datei</div>
<div class="ui" style="left:30.00px;top:15.77px;font-size:7.3px;letter-spacing:-0.030px;color:#000;">Bearbeiten</div>
<div class="ui" style="left:73.75px;top:15.77px;font-size:7.3px;letter-spacing:-0.083px;color:#000;">Suchen</div>
<div class="ui" style="left:107.00px;top:15.77px;font-size:7.3px;letter-spacing:0.080px;color:#000;">Ansicht</div>
<div class="ui" style="left:140.50px;top:15.77px;font-size:7.3px;letter-spacing:0.113px;color:#000;">Kodierung</div>
<div class="ui" style="left:183.75px;top:15.77px;font-size:7.3px;letter-spacing:-0.100px;color:#000;">Sprachen</div>
<div class="ui" style="left:223.25px;top:15.77px;font-size:7.3px;letter-spacing:0.009px;color:#000;">Einstellungen</div>
<div class="ui" style="left:276.25px;top:15.77px;font-size:7.3px;letter-spacing:-0.059px;color:#000;">Werkzeuge</div>
<div class="ui" style="left:321.25px;top:15.77px;font-size:7.3px;letter-spacing:0.154px;color:#000;">Makro</div>
<div class="ui" style="left:351.25px;top:15.77px;font-size:7.3px;letter-spacing:0.109px;color:#000;">Ausführen</div>
<div class="ui" style="left:394.50px;top:15.77px;font-size:7.3px;letter-spacing:0.018px;color:#000;">Erweiterungen</div>
<div class="ui" style="left:450.50px;top:15.77px;font-size:7.3px;letter-spacing:-0.107px;color:#000;">Fenster</div>
<div class="ui" style="left:483.00px;top:15.77px;font-size:7.3px;letter-spacing:-0.562px;color:#000;">?</div>
<div class="ui" style="left:1192.00px;top:15.87px;font-size:7.0px;letter-spacing:-0.672px;color:#000;">X</div>
<div class="ui" style="left:13.30px;top:47.04px;font-size:6.8px;letter-spacing:-0.102px;color:#000;">fendt900.xml</div>
<div class="ui" style="left:2.00px;top:638.77px;font-size:7.3px;letter-spacing:0.015px;color:#000;">eXtensible Markup Language file</div>
<div class="ui" style="left:740.00px;top:638.77px;font-size:7.3px;letter-spacing:-0.066px;color:#000;">length : 50.240</div>
<div class="ui" style="left:795.00px;top:638.77px;font-size:7.3px;letter-spacing:-0.142px;color:#000;">lines : 628</div>
<div class="ui" style="left:865.00px;top:638.77px;font-size:7.3px;letter-spacing:-0.172px;color:#000;">Ln : 624</div>
<div class="ui" style="left:897.70px;top:638.77px;font-size:7.3px;letter-spacing:-0.145px;color:#000;">Col : 18</div>
<div class="ui" style="left:929.30px;top:638.77px;font-size:7.3px;letter-spacing:-0.209px;color:#000;">Sel : 0 | 0</div>
<div class="ui" style="left:1027.70px;top:638.77px;font-size:7.3px;letter-spacing:-0.189px;color:#000;">Unix (LF)</div>
<div class="ui" style="left:1096.00px;top:638.77px;font-size:7.3px;letter-spacing:0.030px;color:#000;">UTF-8-BOM</div>
<div class="ui" style="left:1171.70px;top:638.77px;font-size:7.3px;letter-spacing:-0.391px;color:#000;">INS</div>
<div class="ui" style="left:55.00px;top:657.51px;font-size:9.2px;letter-spacing:-0.040px;color:#3c3c3c;">Zur Suche Text hier eingeben</div>
<div class="ui" style="left:1137.60px;top:652.06px;font-size:7.9px;letter-spacing:-0.550px;color:#fff;">20:26</div>
<div class="ui" style="left:1129.90px;top:662.96px;font-size:7.9px;letter-spacing:-0.630px;color:#fff;">10.06.2018</div>
</body></html>
